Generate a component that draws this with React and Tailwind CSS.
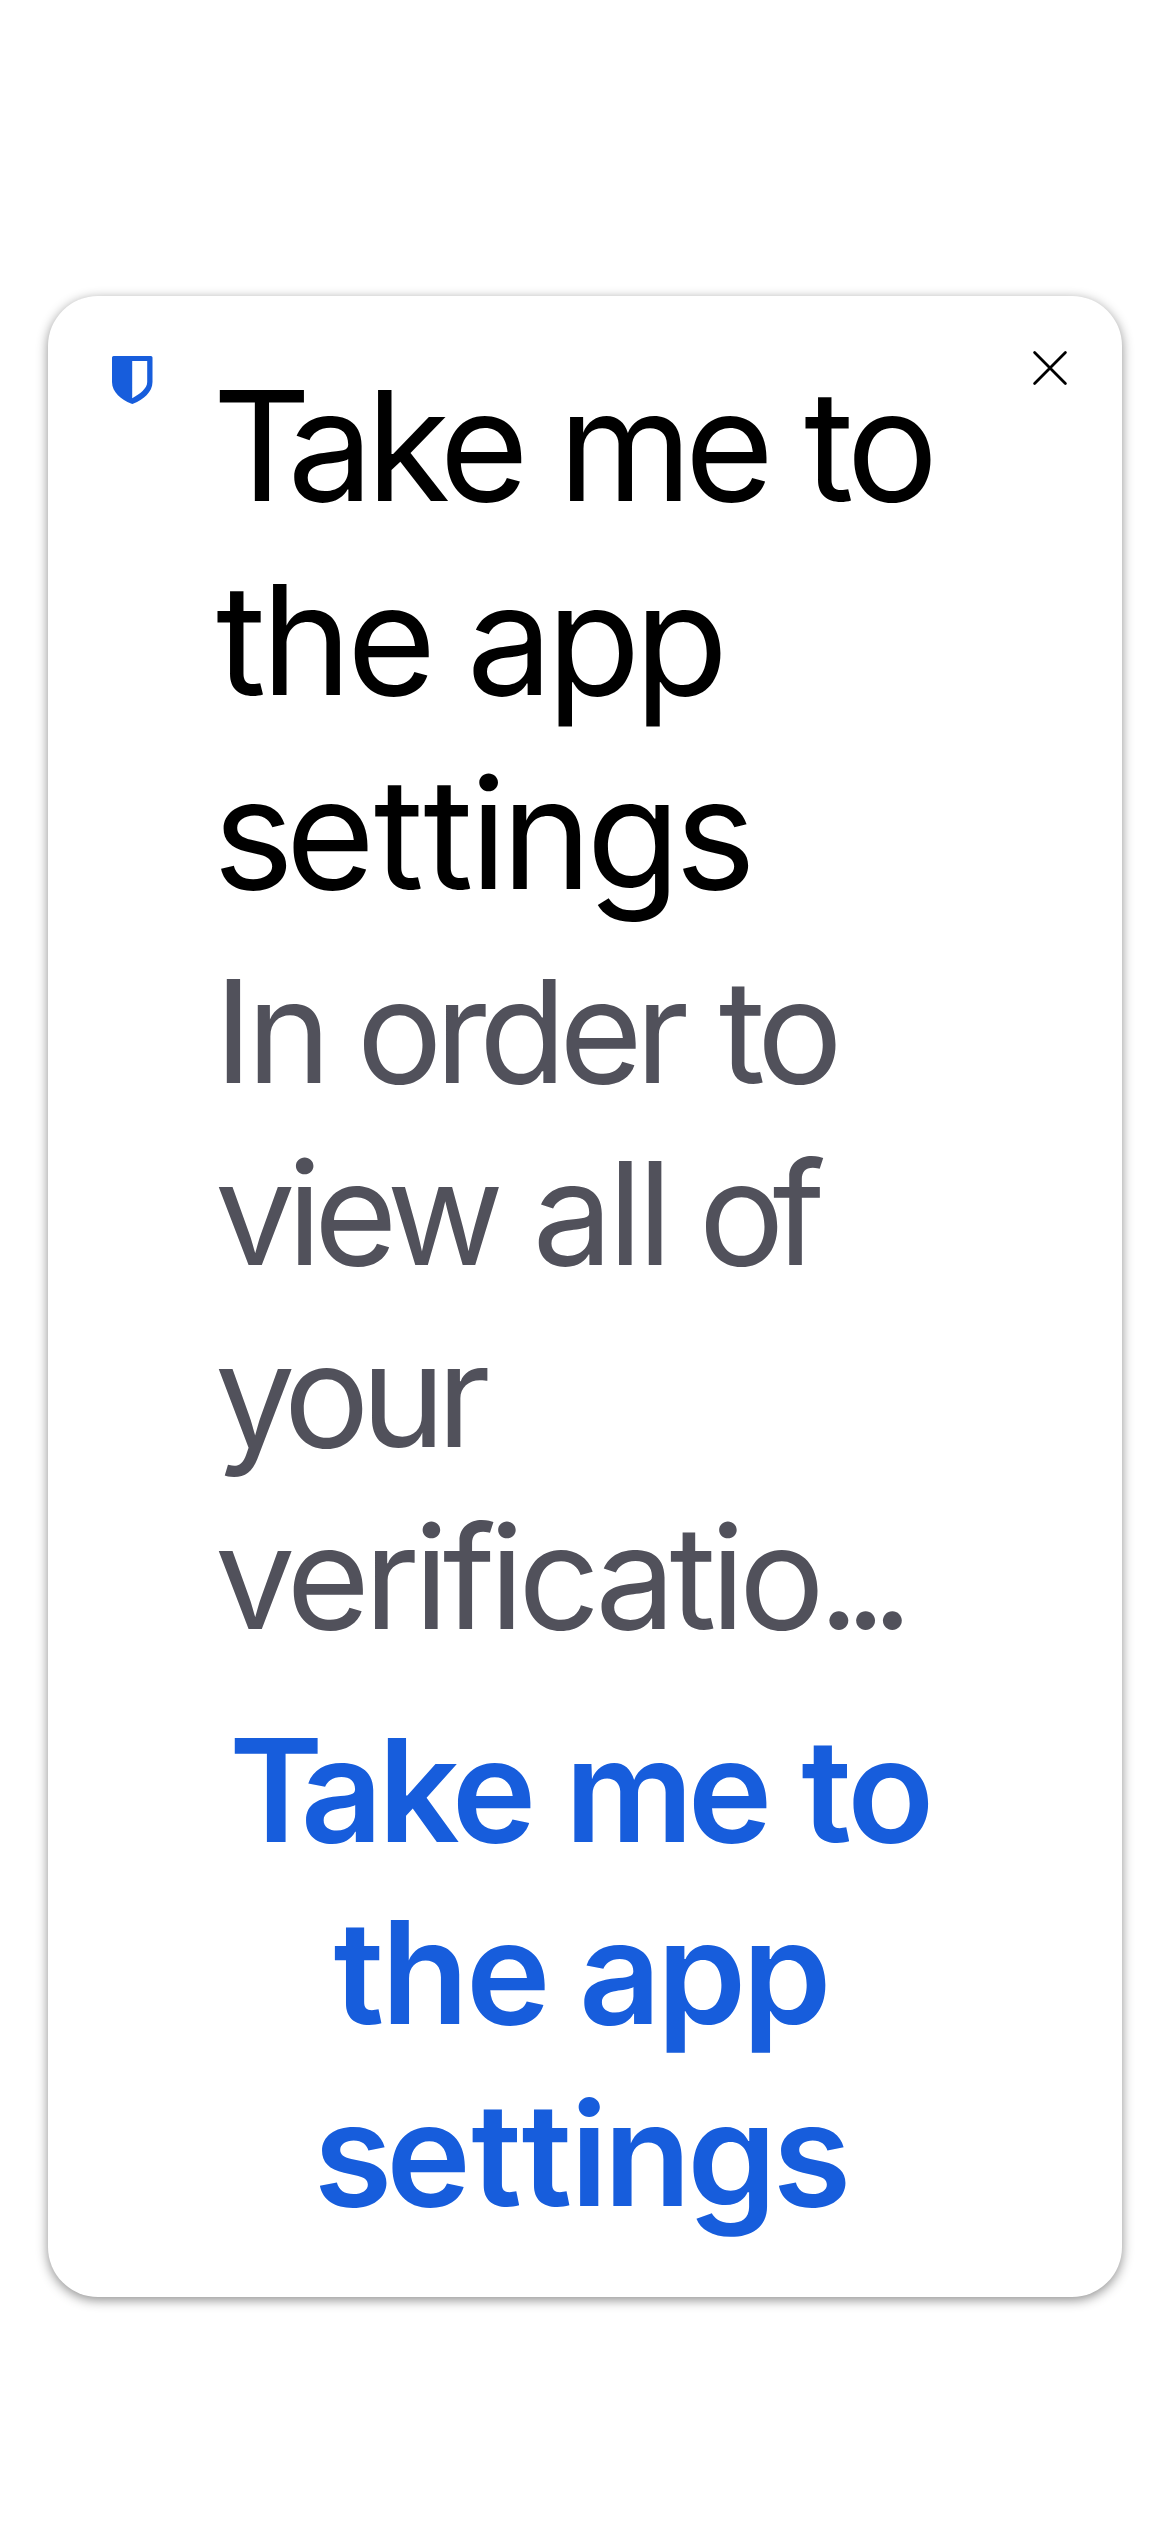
function Shield() {
  return (
    <svg className="mt-[60px] h-12 w-[41px] shrink-0" viewBox="0 0 41 48" aria-hidden="true">
      <path
        fill="#175ddc"
        fillRule="evenodd"
        d="M1.6 0H38.9Q40.5 0 40.5 1.6V26C40.5 36.5 31 43.5 21.6 47.6Q20.3 48.2 19 47.6C9.5 43.5 0 36.5 0 26V1.6Q0 0 1.6 0ZM20.2 5V42.3C28 37.8 35.2 32.5 35.2 26V5Z"
      />
    </svg>
  );
}

function Close() {
  return (
    <button aria-label="Close" className="mt-[54px] mr-[54px] h-9 w-9 shrink-0">
      <svg className="h-9 w-9" viewBox="0 0 36 36" fill="none" stroke="#000" strokeWidth="2.8" strokeLinecap="round">
        <path d="M2.6 2.6L33.4 33.4M33.4 2.6L2.6 33.4" />
      </svg>
    </button>
  );
}

function Line({ children }) {
  return <span className="flex whitespace-nowrap">{children}</span>;
}

export default function App() {
  return (
    <main className="h-[2532px] w-[1170px] bg-white px-12 pt-[296px] font-['Inter',sans-serif]">
      <section className="flex h-[2001px] w-[1074px] items-start rounded-[50px] bg-white pl-16 shadow-[0_3px_12px_rgba(0,0,0,0.45)]">
        <Shield />
        <div className="ml-[65px] w-[764px] pt-[53px]">
          <h1 className="text-[153px] leading-[194px] text-black">
            <Line>
              <span className="-ml-[5.5px] tracking-[-7.2px]"><span className="tracking-[-23.8px]">T</span>ake</span>{" "}
              <span className="ml-[36.7px] tracking-[-7.5px]">me</span>{" "}
              <span className="ml-[37.5px] tracking-[-6px]">to</span>
            </Line>
            <Line>
              <span className="-ml-[2px] tracking-[-4.8px]">the</span>{" "}
              <span className="ml-[35.5px] tracking-[-6px]">app</span>
            </Line>
            <Line>
              <span className="-ml-[5px] tracking-[-8px]">se</span>
              <span className="ml-[6.9px] tracking-[3px]">tt</span>
              <span className="-ml-[6.3px] tracking-[-5.4px]">ings</span>
            </Line>
          </h1>
          <p className="mt-[8.5px] text-[143px] leading-[182px] text-[#51515b]">
            <Line>
              <span className="-ml-[3.7px] tracking-[-6px]">In</span>{" "}
              <span className="ml-[31.5px] tracking-[-7.4px]">order</span>{" "}
              <span className="ml-[37px] tracking-[-7px]">to</span>
            </Line>
            <Line>
              <span className="-ml-[3px] tracking-[-8px]">view</span>{" "}
              <span className="ml-[36.7px] tracking-[-4.8px]">all</span>{" "}
              <span className="ml-[31px] tracking-[-12px]">of</span>
            </Line>
            <Line>
              <span className="-ml-[3px] tracking-[-8.7px]">your</span>
            </Line>
            <Line>
              <span className="-ml-[3px] tracking-[-6px]">verificatio</span>
              <span className="-ml-[0.5px] tracking-[-14.5px]">...</span>
            </Line>
          </p>
          <button className="mt-[31.5px] block text-[143px] font-semibold leading-[182px] text-[#175ddc]">
            <Line>
              <span className="ml-[11.1px] tracking-[-4.6px]"><span className="tracking-[-22.8px]">T</span>ake</span>{" "}
              <span className="ml-[33px] tracking-[-5.8px]">me</span>{" "}
              <span className="ml-[34.8px] tracking-[-3.2px]">to</span>
            </Line>
            <Line>
              <span className="ml-[115.4px] tracking-[-2.9px]">the</span>{" "}
              <span className="ml-[31.4px] tracking-[-4px]">app</span>
            </Line>
            <Line>
              <span className="ml-[95.8px] tracking-[-6px]">se</span>
              <span className="ml-[6.4px] tracking-[4.2px]">tt</span>
              <span className="-ml-[5.8px] tracking-[-4px]">ings</span>
            </Line>
          </button>
        </div>
        <div className="ml-auto">
          <Close />
        </div>
      </section>
    </main>
  );
}
